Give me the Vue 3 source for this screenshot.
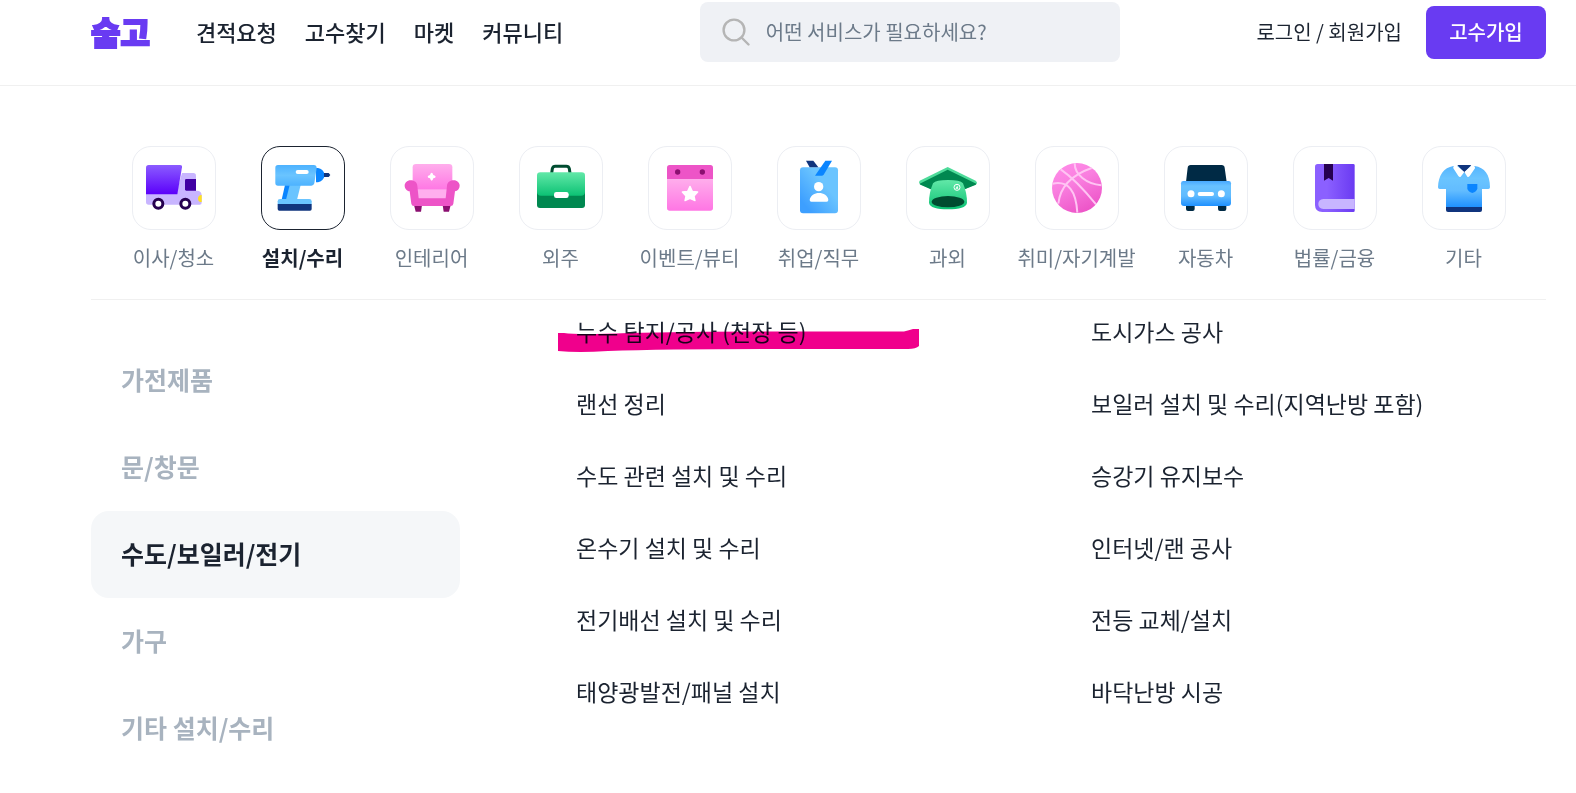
<script setup>
import { ref } from 'vue'

const menus = ['견적요청', '고수찾기', '마켓', '커뮤니티']

const categories = [
  { id: 'moving', name: '이사/청소' },
  { id: 'repair', name: '설치/수리' },
  { id: 'interior', name: '인테리어' },
  { id: 'outsourcing', name: '외주' },
  { id: 'event', name: '이벤트/뷰티' },
  { id: 'job', name: '취업/직무' },
  { id: 'lesson', name: '과외' },
  { id: 'hobby', name: '취미/자기계발' },
  { id: 'car', name: '자동차' },
  { id: 'law', name: '법률/금융' },
  { id: 'etc', name: '기타' }
]

const groups = ['가전제품', '문/창문', '수도/보일러/전기', '가구', '기타 설치/수리']

const services = [
  { name: '누수 탐지/공사 (천장 등)', marked: true },
  { name: '도시가스 공사' },
  { name: '랜선 정리' },
  { name: '보일러 설치 및 수리(지역난방 포함)' },
  { name: '수도 관련 설치 및 수리' },
  { name: '승강기 유지보수' },
  { name: '온수기 설치 및 수리' },
  { name: '인터넷/랜 공사' },
  { name: '전기배선 설치 및 수리' },
  { name: '전등 교체/설치' },
  { name: '태양광발전/패널 설치' },
  { name: '바닥난방 시공' }
]

const keyword = ref('')
const activeCategory = ref('repair')
const activeGroup = ref('수도/보일러/전기')
</script>

<template>
  <div class="page">
    <!-- 아이콘 공용 그라데이션 -->
    <svg class="defs" width="0" height="0" aria-hidden="true">
      <defs>
        <linearGradient id="g-violet" x1="0" y1="0" x2="0" y2="1">
          <stop offset="0" stop-color="#8b5cff" />
          <stop offset="1" stop-color="#5b00fa" />
        </linearGradient>
        <linearGradient id="g-sky" x1="0" y1="0" x2="0" y2="1">
          <stop offset="0" stop-color="#4db2ff" />
          <stop offset="0.5" stop-color="#6ac4ff" />
          <stop offset="1" stop-color="#4db2ff" />
        </linearGradient>
        <linearGradient id="g-pink" x1="0" y1="0" x2="0" y2="1">
          <stop offset="0" stop-color="#ffaeec" />
          <stop offset="1" stop-color="#ff76e4" />
        </linearGradient>
        <linearGradient id="g-green" x1="0" y1="0" x2="0" y2="1">
          <stop offset="0" stop-color="#62e8a8" />
          <stop offset="1" stop-color="#0cc274" />
        </linearGradient>
        <linearGradient id="g-card" x1="0.9" y1="0.2" x2="0.2" y2="0.9">
          <stop offset="0.3" stop-color="#6ac4ff" />
          <stop offset="1" stop-color="#3d9fff" />
        </linearGradient>
        <linearGradient id="g-ball" x1="0.2" y1="0" x2="0.7" y2="1">
          <stop offset="0" stop-color="#ff8ce8" />
          <stop offset="0.4" stop-color="#f97edf" />
          <stop offset="1" stop-color="#ec52c6" />
        </linearGradient>
        <linearGradient id="g-car" x1="0" y1="0" x2="0" y2="1">
          <stop offset="0" stop-color="#48a9ff" />
          <stop offset="0.2" stop-color="#68c2ff" />
          <stop offset="0.6" stop-color="#60bbff" />
          <stop offset="1" stop-color="#1e90ff" />
        </linearGradient>
        <linearGradient id="g-book" x1="0" y1="0" x2="1" y2="0">
          <stop offset="0.3" stop-color="#8b60ff" />
          <stop offset="1" stop-color="#6a3af2" />
        </linearGradient>
        <linearGradient id="g-shirt" x1="0" y1="0" x2="0" y2="1">
          <stop offset="0" stop-color="#55b5ff" />
          <stop offset="0.3" stop-color="#6ac4ff" />
          <stop offset="0.6" stop-color="#62bcff" />
          <stop offset="1" stop-color="#1e90ff" />
        </linearGradient>
      </defs>
    </svg>

    <header class="header">
      <div class="header-left">
        <a class="logo" href="#">숨고</a>
        <nav class="menu">
          <a v-for="menu in menus" :key="menu" href="#">{{ menu }}</a>
        </nav>
      </div>

      <label class="search">
        <svg width="28" height="28" viewBox="0 0 28 28" fill="none" stroke="#b5b5b5" stroke-width="2.4" stroke-linecap="round">
          <circle cx="12" cy="12" r="10.4" />
          <path d="M19.5 19.5 26.5 26.5" />
        </svg>
        <input v-model="keyword" type="text" aria-label="서비스 검색" placeholder="어떤 서비스가 필요하세요?">
      </label>

      <div class="header-right">
        <a class="login" href="#">로그인 / 회원가입</a>
        <button type="button" class="join">고수가입</button>
      </div>
    </header>

    <main class="content">
      <div class="categories">
        <button
          v-for="category in categories"
          :key="category.id"
          type="button"
          class="category"
          :class="{ active: category.id === activeCategory }"
          @click="activeCategory = category.id"
        >
          <span class="tile">
            <svg viewBox="3 3 246 246" aria-hidden="true">
              <g v-if="category.id === 'moving'">
                <path d="M42 130H136L150 81H184Q192 81 192 89V134H197Q209 136 209 148V170Q209 176 203 176H50Q42 176 42 168Z" fill="#c8b5ff" />
                <path d="M50 57H144Q151 57 150 64L136 145H42V65Q42 57 50 57Z" fill="url(#g-violet)" />
                <path d="M163 99H192V134H163Q159 134 159 130V103Q159 99 163 99Z" fill="#4100a3" />
                <path d="M209 147Q198 148 198 158Q198 168 209 168Z" fill="#ffe11c" />
                <g fill="#fff" stroke="#260050" stroke-width="9">
                  <circle cx="79" cy="173" r="13.5" />
                  <circle cx="160" cy="173" r="13.5" />
                </g>
              </g>
              <g v-else-if="category.id === 'repair'">
                <path d="M72 117H92L80 161H62Z" fill="#0a85ff" />
                <path d="M86 117H119L108 161H75Z" fill="#6ac4ff" />
                <path d="M165 66H171Q186 68 192 87Q186 107 171 109H165Z" fill="#0a85ff" />
                <path d="M189 81H203L208 87L203 93H189Z" fill="#10347d" />
                <path d="M51 57H158Q167 57 167 66L160 112Q158 119 151 119H51Q43 119 43 111V65Q43 57 51 57Z" fill="url(#g-sky)" />
                <rect x="104" y="72" width="39" height="12" rx="6" fill="#fff" />
                <path d="M57 159H145Q152 159 152 166V175H50V166Q50 159 57 159Z" fill="#6ac4ff" />
                <path d="M50 174H152V189Q152 194 147 194H55Q50 194 50 189Z" fill="#10347d" />
              </g>
              <g v-else-if="category.id === 'interior'">
                <path d="M72 177H96L93 197H77Z" fill="#8b0f70" />
                <path d="M158 177H182L177 197H161Z" fill="#8b0f70" />
                <path d="M78 54H177Q187 54 187 64V132H68V64Q68 54 78 54Z" fill="url(#g-pink)" />
                <rect x="80" y="130" width="92" height="30" fill="#ffaeee" />
                <path d="M62 103C51 103 44 111 44 119C44 128 51 135 59 136L64 173Q65 180 72 180H182Q189 180 190 173L195 136C203 135 209 128 209 119C209 111 202 103 191 103C179 103 172 110 171 119L167 157H86L82 119C81 110 74 103 62 103Z" fill="#ed54c7" />
                <path d="M125 80Q128 80 130 87Q137 89 137 92Q137 95 130 97Q128 104 125 104Q122 104 120 97Q113 95 113 92Q113 89 120 87Q122 80 125 80Z" fill="#fff" />
              </g>
              <g v-else-if="category.id === 'outsourcing'">
                <path d="M98 82L100 68Q102 61 109 61H142Q149 61 151 68L153 82" fill="none" stroke="#004c30" stroke-width="9" />
                <path d="M54 138H198V177Q198 186 189 186H63Q54 186 54 177Z" fill="#008850" />
                <path d="M64 79H188Q198 79 198 89V138Q198 149 186 149H66Q54 149 54 138V89Q54 79 64 79Z" fill="url(#g-green)" />
                <rect x="105" y="138" width="44" height="18" rx="7" fill="#fff" />
              </g>
              <g v-else-if="category.id === 'event'">
                <path d="M57 98H195V186Q195 194 187 194H65Q57 194 57 186Z" fill="url(#g-pink)" />
                <path d="M65 57H187Q195 57 195 65V99H57V65Q57 57 65 57Z" fill="#ed54c7" />
                <circle cx="89" cy="78" r="8" fill="#8b0f70" />
                <circle cx="163" cy="78" r="8" fill="#8b0f70" />
                <path d="M126 121L133 136L149 138L138 150L141 164L126 157L111 164L114 150L103 138L119 136Z" fill="#fff" stroke="#fff" stroke-width="4" stroke-linejoin="round" />
              </g>
              <g v-else-if="category.id === 'job'">
                <rect x="69" y="64" width="114" height="138" rx="9" fill="url(#g-card)" />
                <path d="M87 44H109L124 64H98Z" fill="#10347d" />
                <path d="M145 44H165L140 86Q138 89 134 89H114Z" fill="#0a85ff" />
                <circle cx="125" cy="122" r="14" fill="#fff" />
                <path d="M98 162C100 148 113 141 126 141C140 141 152 148 154 162Q154 167 149 167H103Q98 167 98 162Z" fill="#fff" />
              </g>
              <g v-else-if="category.id === 'lesson'">
                <path d="M125 63L209 104Q215 108 212 113L170 133L125 152L80 133L41 113Q37 108 41 104Z" fill="#4edb9a" />
                <path d="M125 71L211 113Q211 116 208 117L170 132L125 152L80 132L45 117Q41 116 41 113Z" fill="#008850" />
                <path d="M81 112Q90 102 126 102Q162 102 171 112Q183 140 183 170C181 184 160 190 126 190C92 190 71 184 69 170Q69 140 81 112Z" fill="url(#g-green)" />
                <ellipse cx="126" cy="167" rx="49" ry="17" fill="#004c30" />
                <circle cx="153" cy="124" r="9" fill="none" stroke="#fff" stroke-width="3" />
                <path d="M154 119L157 128H148Z" fill="#fff" />
              </g>
              <g v-else-if="category.id === 'hobby'">
                <circle cx="126" cy="126" r="75" fill="url(#g-ball)" />
                <g fill="none" stroke="#ffc4f3" stroke-width="6">
                  <path d="M77 70Q124 102 183 175" />
                  <path d="M170 66Q78 98 70 173" />
                  <path d="M119 52C119 86 154 114 199 118" />
                  <path d="M53 113C101 103 123 136 127 200" />
                </g>
              </g>
              <g v-else-if="category.id === 'car'">
                <path d="M66 176H92V189Q92 195 86 195H72Q66 195 66 189ZM162 176H187V189Q187 195 181 195H168Q162 195 162 189Z" fill="#002a45" />
                <path d="M80 57H173Q181 57 182 65L188 108H66L71 65Q72 57 80 57Z" fill="#002a45" />
                <path d="M58 105H194Q201 105 201 112V171Q201 180 192 180H60Q51 180 51 171V112Q51 105 58 105Z" fill="url(#g-car)" />
                <circle cx="81" cy="143" r="10.5" fill="#fff" />
                <circle cx="172" cy="143" r="10.5" fill="#fff" />
                <rect x="101" y="138" width="49" height="12" rx="6" fill="#fff" />
              </g>
              <g v-else-if="category.id === 'law'">
                <path d="M74 54H181Q185 54 185 58V194Q185 198 181 198H88Q66 198 66 177V62Q66 54 74 54Z" fill="url(#g-book)" />
                <path d="M93 54H120V104L107 96L93 104Z" fill="#260050" />
                <path d="M91 159H185V189H91Q76 188 76 174Q76 160 91 159Z" fill="#c8b5ff" />
              </g>
              <g v-else>
                <path d="M94 60L158 60C188 65 204 85 204 124Q204 129 199 129H180V184H72V129H53Q48 129 48 124C49 88 65 65 94 60Z" fill="url(#g-shirt)" />
                <path d="M72 183H180V192Q180 198 174 198H78Q72 198 72 192Z" fill="#10347d" />
                <path d="M106 57H148L127 80Z" fill="#10347d" />
                <path d="M102 57L127 78L116 92Q113 95 109 90L94 67Q92 60 102 57ZM150 57L127 78L136 92Q139 95 143 90L159 67Q160 60 150 57Z" fill="#fff" />
                <path d="M136 114H166V128Q164 136 151 141Q138 136 136 128Z" fill="#0a85ff" />
              </g>
            </svg>
          </span>
          <span class="category-name">{{ category.name }}</span>
        </button>
      </div>

      <div class="panel">
        <aside class="groups">
          <button
            v-for="group in groups"
            :key="group"
            type="button"
            class="group"
            :class="{ active: group === activeGroup }"
            @click="activeGroup = group"
          >
            {{ group }}
          </button>
        </aside>

        <ul class="services">
          <li v-for="service in services" :key="service.name">
            <a href="#">{{ service.name }}</a>
            <!-- 형광펜 표시 -->
            <svg v-if="service.marked" class="marker" width="361" height="24" viewBox="0 0 361 24" aria-hidden="true">
              <path d="M0 4H6Q20 6 70 4Q140 2 240 2.500H346Q351 1 355 0H361V17Q358 20 350 20H230Q110 20 50 22Q20 24 0 22Z" fill="#f0008c" />
            </svg>
          </li>
        </ul>
      </div>
    </main>
  </div>
</template>

<style>
  body {
    margin: 0;
    background-color: #fff;
  }
</style>

<style scoped>
  .page {
    font-family: "Noto Sans CJK KR", "Noto Sans", sans-serif;
    color: #1b2330;
  }

  .page a {
    color: inherit;
    text-decoration: none;
  }

  .page button {
    border: none;
    background: none;
    padding: 0;
    font-family: inherit;
    color: inherit;
    cursor: pointer;
  }

  .defs {
    position: absolute;
  }

  .header {
    display: flex;
    align-items: center;
    justify-content: space-between;
    padding: 2px 30px 23px 91px;
    border-bottom: 1px solid #f0f0f0;
  }

  .header-left,
  .header-right {
    display: flex;
    align-items: center;
    white-space: nowrap;
  }

  .header-left {
    gap: 46px;
    padding-bottom: 2px;
  }

  .header-right {
    gap: 24px;
  }

  .header .logo {
    font-size: 32px;
    line-height: 40px;
    font-weight: 900;
    color: #693bf2;
    -webkit-text-stroke: 2px #693bf2;
  }

  .menu {
    display: flex;
    gap: 28px;
    font-size: 22px;
    line-height: 32px;
    font-weight: 500;
  }

  .search {
    display: flex;
    align-items: center;
    gap: 16px;
    box-sizing: border-box;
    width: 420px;
    height: 60px;
    padding: 0 22px;
    border-radius: 8px;
    background-color: #eff1f5;
  }

  .search input {
    flex: 1;
    min-width: 0;
    padding: 0;
    border: none;
    outline: none;
    background: none;
    font-family: inherit;
    font-size: 20px;
    line-height: 30px;
    color: #1b2330;
  }

  .search input::placeholder {
    color: #6c7a89;
    opacity: 1;
  }

  .login {
    font-size: 20px;
    line-height: 30px;
  }

  .page .join {
    width: 120px;
    height: 53px;
    padding-bottom: 2px;
    border-radius: 8px;
    background-color: #693bf2;
    color: #fff;
    font-size: 20px;
    font-weight: 500;
  }

  .content {
    padding: 60px 30px 0 91px;
  }

  .categories {
    display: grid;
    grid-template-columns: repeat(11, 1fr);
    padding: 0 18px 26px;
    border-bottom: 1px solid #f0f0f0;
  }

  .category {
    display: flex;
    flex-direction: column;
    align-items: center;
    gap: 13px;
  }

  .tile {
    box-sizing: border-box;
    width: 84px;
    height: 84px;
    border: 1px solid #eceef3;
    border-radius: 19px;
  }

  .tile svg {
    display: block;
  }

  .category-name {
    font-size: 20px;
    line-height: 30px;
    color: #6c7a89;
    white-space: nowrap;
  }

  .category.active .tile {
    border-color: #1b2330;
  }

  .category.active .category-name {
    color: #1b2330;
    font-weight: 700;
  }

  .panel {
    display: flex;
    gap: 116px;
  }

  .groups {
    display: flex;
    flex-direction: column;
    width: 369px;
    padding-top: 37px;
  }

  .page .group {
    height: 87px;
    padding: 0 30px 4px;
    border-radius: 18px;
    text-align: left;
    font-size: 25px;
    font-weight: 700;
    color: #a8b3bf;
  }

  .page .group.active {
    background-color: #f5f7f9;
    color: #1b2330;
  }

  .services {
    flex: 1;
    display: grid;
    grid-template-columns: 515px 1fr;
    grid-auto-rows: 30px;
    row-gap: 42px;
    margin: 0;
    padding: 16px 0 0;
    list-style: none;
    font-size: 23px;
    line-height: 30px;
    white-space: nowrap;
  }

  .services li {
    position: relative;
  }

  .marker {
    position: absolute;
    left: -18px;
    top: 13px;
    mix-blend-mode: multiply;
  }
</style>
